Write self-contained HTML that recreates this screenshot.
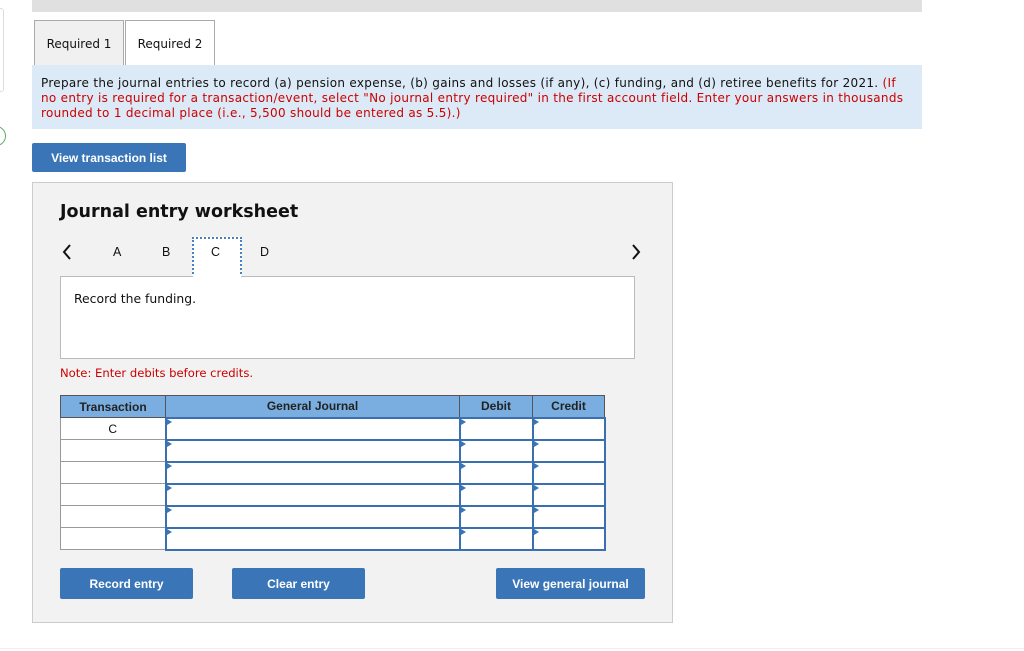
<!DOCTYPE html>
<html><head><meta charset="utf-8"><style>
*{margin:0;padding:0;box-sizing:border-box}
body{width:1024px;height:651px;background:#fff;position:relative;overflow:hidden;font-family:"DejaVu Sans","Liberation Sans",sans-serif;color:#111}
.a{position:absolute}
.v{font-family:"DejaVu Sans",sans-serif}
.btn{position:absolute;background:#3a76b7;color:#fff;font:bold 12px "Liberation Sans",sans-serif;display:flex;align-items:center;justify-content:center;border-radius:2px}
.tab{position:absolute;top:20px;height:46px;border:1px solid #aaa;border-bottom:none;font-size:12px;display:flex;align-items:center;justify-content:center}
table{border-collapse:collapse;position:absolute;left:60px;top:395px}
td,th{font:12px "Liberation Sans",sans-serif;height:22px;padding:0}
th{background:#7aaee0;font-weight:bold;border:1px solid #555;color:#222}
td.t{border:1px solid #999;background:#fff;text-align:center;width:105px}
td.i{border:2px solid #3a6fb0;background:#fff;position:relative}
td.i:before{content:"";position:absolute;left:0;top:0;border-left:5px solid #3a76b7;border-top:3px solid transparent;border-bottom:3px solid transparent}
</style></head><body>
<div class="a" style="left:32px;top:0;width:890px;height:12px;background:#e0e0e0"></div>
<div class="a" style="left:-14px;top:126px;width:20px;height:20px;border:1px solid #6a6;border-radius:50%"></div>
<div class="a" style="left:-4px;top:8px;width:8px;height:84px;border:1px solid #ddd;border-radius:3px"></div>
<div class="tab" style="left:34px;width:90px;background:#f0f0f0">Required 1</div>
<div class="tab" style="left:125px;width:90px;background:#fff">Required 2</div>
<div class="a v" style="left:32px;top:65px;width:890px;height:64px;background:#dceaf7;padding:11px 9px 0;font-size:12px;line-height:15px;letter-spacing:0.3px">Prepare the journal entries to record (a) pension expense, (b) gains and losses (if any), (c) funding, and (d) retiree benefits for 2021. <span style="color:#c00">(If no entry is required for a transaction/event, select "No journal entry required" in the first account field. Enter your answers in thousands rounded to 1 decimal place (i.e., 5,500 should be entered as 5.5).)</span></div>
<div class="btn" style="left:32px;top:143px;width:154px;height:29px">View transaction list</div>
<div class="a" style="left:32px;top:182px;width:641px;height:441px;background:#f2f2f2;border:1px solid #ccc"></div>
<div class="a v" style="left:60px;top:202px;font-size:17.5px;font-weight:bold">Journal entry worksheet</div>
<svg class="a" style="left:62px;top:244px" width="10" height="16"><path d="M8 1L2 8L8 15" fill="none" stroke="#111" stroke-width="2"/></svg>
<svg class="a" style="left:631px;top:244px" width="10" height="16"><path d="M2 1L8 8L2 15" fill="none" stroke="#111" stroke-width="2"/></svg>
<div class="a" style="left:192px;top:237px;width:50px;height:41px;background:#fff;border:2px dotted #4a80c0;border-bottom:none"></div>
<div class="a" style="left:60px;top:276px;width:575px;height:83px;background:#fff;border:1px solid #bbb"></div>
<div class="a" style="left:193px;top:276px;width:48px;height:2px;background:#fff"></div>
<div class="a" style="left:113px;top:245px;font:12.5px 'Liberation Sans'">A</div>
<div class="a" style="left:162px;top:245px;font:12.5px 'Liberation Sans'">B</div>
<div class="a" style="left:211px;top:245px;font:12.5px 'Liberation Sans'">C</div>
<div class="a" style="left:260px;top:245px;font:12.5px 'Liberation Sans'">D</div>
<div class="a v" style="left:74px;top:291px;font-size:12.4px">Record the funding.</div>
<div class="a v" style="left:60px;top:366px;font-size:11.6px;color:#c00">Note: Enter debits before credits.</div>
<table>
<tr><th style="width:105px">Transaction</th><th style="width:294px">General Journal</th><th style="width:73px">Debit</th><th style="width:72px">Credit</th></tr>
<tr><td class="t">C</td><td class="i"></td><td class="i"></td><td class="i"></td></tr>
<tr><td class="t"></td><td class="i"></td><td class="i"></td><td class="i"></td></tr>
<tr><td class="t"></td><td class="i"></td><td class="i"></td><td class="i"></td></tr>
<tr><td class="t"></td><td class="i"></td><td class="i"></td><td class="i"></td></tr>
<tr><td class="t"></td><td class="i"></td><td class="i"></td><td class="i"></td></tr>
<tr><td class="t"></td><td class="i"></td><td class="i"></td><td class="i"></td></tr>
</table>
<div class="btn" style="left:60px;top:568px;width:133px;height:31px">Record entry</div>
<div class="btn" style="left:232px;top:568px;width:133px;height:31px">Clear entry</div>
<div class="btn" style="left:496px;top:568px;width:149px;height:31px">View general journal</div>
<div class="a" style="left:0;top:648px;width:1024px;height:1px;background:#eee"></div>
</body></html>
